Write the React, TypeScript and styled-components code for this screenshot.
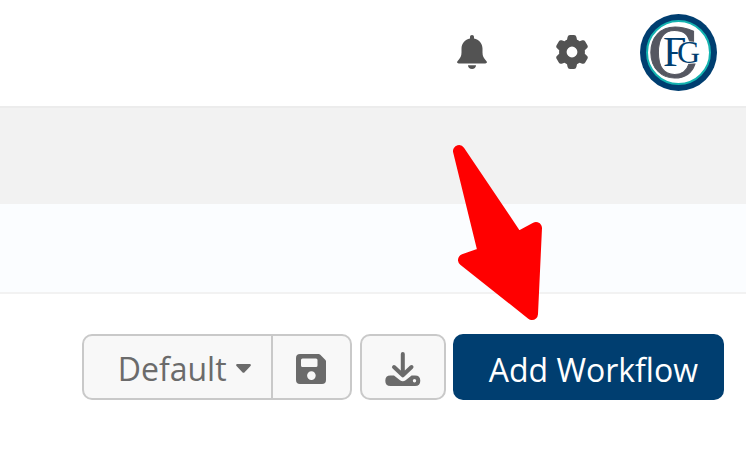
import React from "react";
import styled, { createGlobalStyle } from "styled-components";

const GlobalStyle = createGlobalStyle`
  *, *::before, *::after { box-sizing: border-box; }
  body { margin: 0; background: #fff; font-family: "Open Sans", "Noto Sans", sans-serif; }
`;

const Page = styled.div`
  position: relative;
  min-height: 100vh;
  overflow: hidden;
`;

const Header = styled.header`
  display: flex;
  align-items: center;
  justify-content: flex-end;
  gap: 43px;
  height: 108px;
  padding: 0 29px 2px 0;
  border-bottom: 2px solid #ececec;
`;

const Actions = styled.div`
  display: flex;
  gap: 50px;
`;

const IconButton = styled.button`
  display: flex;
  align-items: center;
  justify-content: center;
  width: 50px;
  height: 50px;
  padding: 0;
  border: 0;
  background: none;
  color: #535353;
`;

const Avatar = styled.a`
  display: block;
  width: 77px;
  height: 77px;
`;

const Band = styled.div`
  height: 96px;
  background: #f2f2f2;
`;

const SubBand = styled.div`
  height: 90px;
  background: #fbfdff;
  border-bottom: 2px solid #f2f2f2;
`;

const Toolbar = styled.div`
  display: flex;
  justify-content: flex-end;
  gap: 8px;
  padding: 40px 22px;
`;

const Group = styled.div`
  display: flex;
  height: 66px;
  border: 2px solid #c9c9c9;
  border-radius: 10px;
  background: #f8f8f8;
  color: #6b6b6b;
  overflow: hidden;
`;

const SelectWrap = styled.div`
  display: flex;
  align-items: center;
  position: relative;
  border-right: 2px solid #c9c9c9;
`;

const ViewSelect = styled.select`
  appearance: none;
  width: 187px;
  height: 62px;
  padding: 4px 34px 0;
  border: 0;
  background: none;
  color: inherit;
  font: 400 32px/44px "Open Sans", "Noto Sans", sans-serif;
`;

const Caret = styled.svg`
  position: absolute;
  right: 20px;
  top: 28px;
  pointer-events: none;
`;

const ToolButton = styled.button`
  display: flex;
  align-items: center;
  justify-content: center;
  width: 77px;
  padding: 4px 0 0;
  border: 0;
  background: none;
  color: inherit;
`;

const DownloadButton = styled(ToolButton)`
  width: 86px;
  height: 66px;
  border: 2px solid #c9c9c9;
  border-radius: 10px;
  background: #f8f8f8;
  color: #6b6b6b;
`;

const PrimaryButton = styled.button`
  height: 66px;
  margin-left: -1px;
  padding: 6px 26px 0 36px;
  border: 0;
  border-radius: 10px;
  background: #003e70;
  color: #fff;
  font: 400 32px/44px "Open Sans", "Noto Sans", sans-serif;
  white-space: nowrap;
`;

const Pointer = styled.svg`
  position: absolute;
  right: 196px;
  top: 140px;
  pointer-events: none;
`;

const BellIcon = () => (
  <svg width="30" height="34" viewBox="0 0 30 34" fill="currentColor" aria-hidden="true">
    <path d="M15 0c1.200 0 2 .8 2 2v1.600c5 1 8.500 5 8.500 10v4c0 3.500 1.200 5.600 3.600 8.200 1.500 1.600.7 2.700-.8 2.700H1.700c-1.500 0-2.300-1.100-.8-2.700 2.400-2.600 3.600-4.700 3.600-8.200v-4c0-5 3.500-9 8.500-10V2c0-1.200.8-2 2-2z" />
    <path d="M11 30.200h8c0 2.300-1.700 3.800-4 3.800s-4-1.500-4-3.800z" />
  </svg>
);

const GearIcon = () => (
  <svg width="32" height="34" viewBox="0 0 32 34" fill="currentColor" aria-hidden="true">
    <path
      fillRule="evenodd"
      d="M14 0h4q2 0 2.400 2l.6 2.800q1.200.5 2.500 1.400l2.800-.9q1.900-.6 2.900 1.100l2.200 3.900q1 1.700-.5 3l-2.100 1.900q.2 1.800 0 3.600l2.100 1.900q1.500 1.300.5 3l-2.200 3.900q-1 1.700-2.900 1.100l-2.800-.9q-1.300.9-2.500 1.400l-.6 2.800q-.4 2-2.400 2h-4q-2 0-2.400-2l-.6-2.800q-1.200-.5-2.500-1.400l-2.800.9q-1.900.6-2.900-1.100L.6 23.700q-1-1.700.5-3l2.100-1.900q-.2-1.800 0-3.600l-2.100-1.900q-1.500-1.300-.5-3l2.200-3.900q1-1.700 2.900-1.100l2.800.9Q9.800 5.300 11 4.800L11.600 2Q12 0 14 0zM16 11.600a5.400 5.400 0 1 0 0 10.800a5.400 5.400 0 1 0 0-10.800z"
    />
  </svg>
);

const SaveIcon = () => (
  <svg width="30" height="30" viewBox="0 0 30 30" fill="currentColor" aria-hidden="true">
    <path
      fillRule="evenodd"
      d="M4 0h18.500q1 0 1.800.8l4.900 4.900q.8.800.8 1.800V26q0 4-4 4H4q-4 0-4-4V4q0-4 4-4zM6.500 4.500Q5 4.500 5 6v5.500Q5 13 6.500 13h13.500q1.500 0 1.500-1.500V6q0-1.500-1.500-1.500zM15.400 17.300a4.300 4.300 0 1 0 0 8.600a4.300 4.300 0 1 0 0-8.600z"
    />
  </svg>
);

const DownloadIcon = () => (
  <svg width="36" height="34" viewBox="0 0 36 34" aria-hidden="true">
    <path
      fill="currentColor"
      fillRule="evenodd"
      d="M5.500 23.500H9l6 4.700q2.800 2 5.600 0l6-4.700h3.400q5.300 0 5.300 5.200T30 34H5.500Q.3 34 .3 28.700t5.200-5.200zM29.500 27a1.700 1.700 0 1 0 0 3.400a1.700 1.700 0 1 0 0-3.400z"
    />
    <path
      d="M17.800 2v21M9 15l8.800 8.300L26.500 15"
      fill="none"
      stroke="#f8f8f8"
      strokeWidth="6"
      strokeLinecap="round"
      strokeLinejoin="round"
    />
    <path
      d="M17.800 2v21M9 15l8.800 8.300L26.500 15"
      fill="none"
      stroke="currentColor"
      strokeWidth="4"
      strokeLinecap="round"
      strokeLinejoin="round"
    />
  </svg>
);

const Logo = () => (
  <svg width="77" height="77" viewBox="0 0 77 77" fontFamily="Liberation Serif, serif" aria-hidden="true">
    <circle cx="38.500" cy="38.500" r="38.500" fill="#003e70" />
    <circle cx="38.500" cy="38.500" r="31.500" fill="#fff" stroke="#14b3b0" strokeWidth="2" />
    <text x="7" y="63" fontSize="68" fontFamily="DejaVu Serif, serif" fill="#555761" stroke="#555761" strokeWidth="1">C</text>
    <text x="23" y="52" fontSize="42" fill="#003e70">F</text>
    <text x="37" y="49" fontSize="32" fill="#003e70" stroke="#fff" strokeWidth="1" paintOrder="stroke">G</text>
  </svg>
);

export default function App() {
  return (
    <Page>
      <GlobalStyle />
      <Header>
        <Actions>
          <IconButton aria-label="Notifications"><BellIcon /></IconButton>
          <IconButton aria-label="Settings"><GearIcon /></IconButton>
        </Actions>
        <Avatar href="#account" aria-label="Account"><Logo /></Avatar>
      </Header>
      <Band />
      <SubBand />
      <Toolbar>
        <Group>
          <SelectWrap>
            <ViewSelect aria-label="View" defaultValue="default">
              <option value="default">Default</option>
            </ViewSelect>
            <Caret width="15" height="9" viewBox="0 0 15 9" aria-hidden="true">
              <path d="M1 0h13q1.500.6.500 1.900L8.600 8.300q-1.100 1-2.200 0L.5 1.900Q-.5.6 1 0z" fill="currentColor" />
            </Caret>
          </SelectWrap>
          <ToolButton aria-label="Save view"><SaveIcon /></ToolButton>
        </Group>
        <DownloadButton aria-label="Download"><DownloadIcon /></DownloadButton>
        <PrimaryButton>Add Workflow</PrimaryButton>
      </Toolbar>
      <Pointer width="100" height="190" viewBox="0 0 100 190" aria-hidden="true">
        <path
          d="M9 11L67.500 98L86 88L82 174L14 120L34 113z"
          fill="#f00"
          stroke="#f00"
          strokeWidth="12"
          strokeLinejoin="round"
        />
      </Pointer>
    </Page>
  );
}
